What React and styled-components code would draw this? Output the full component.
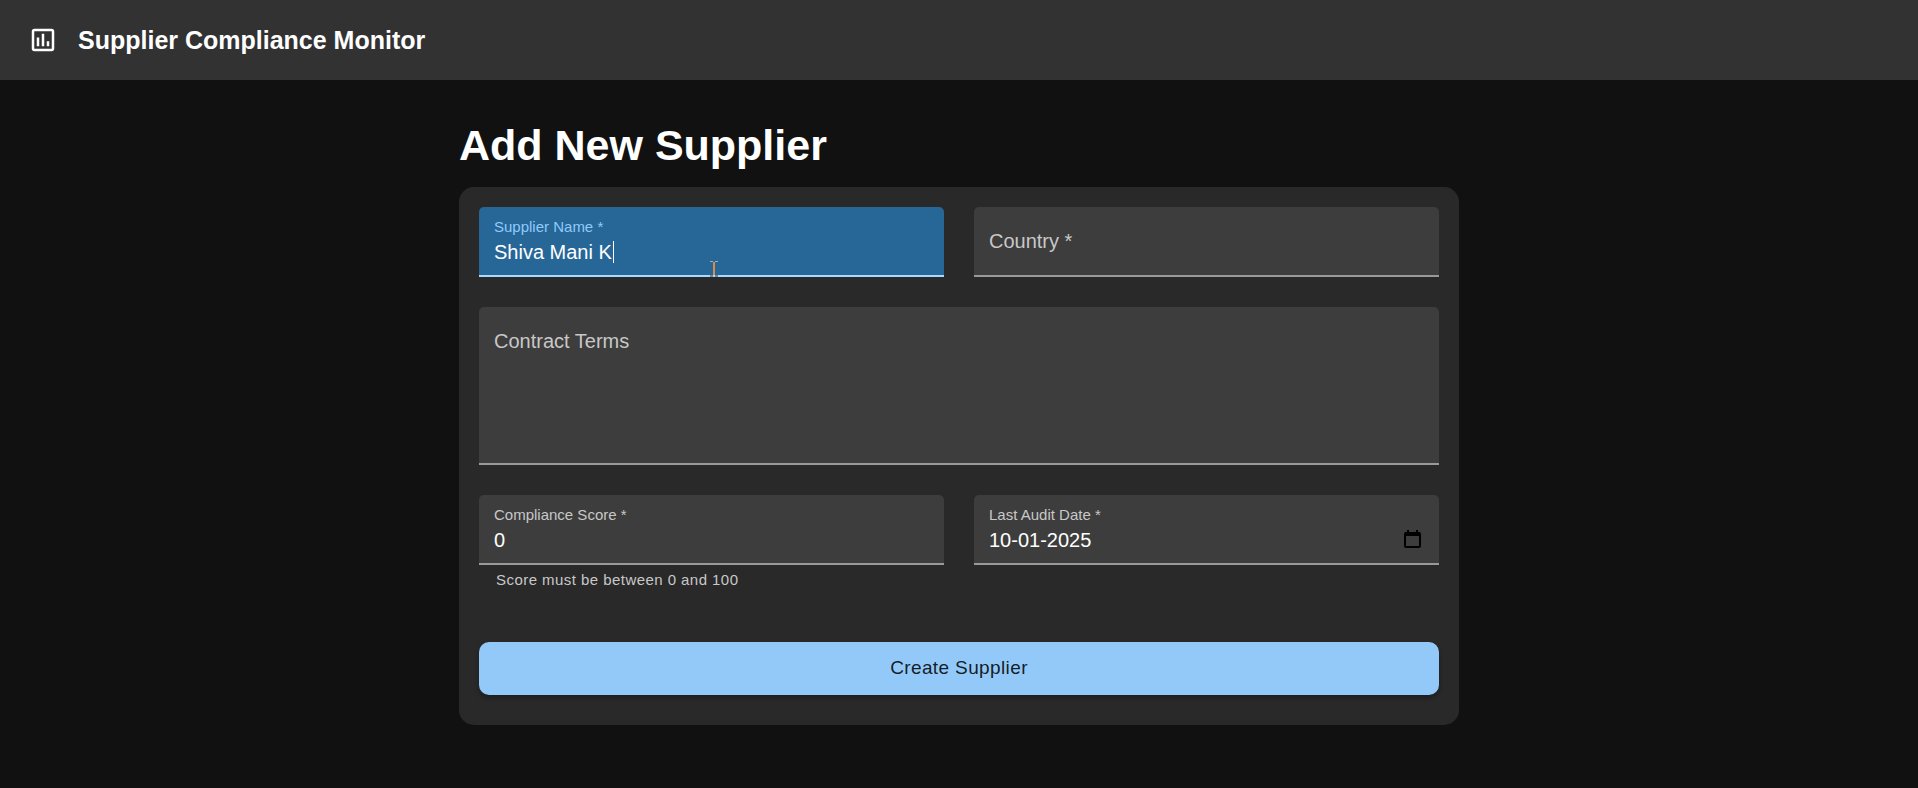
import React, { useState } from "react";
import styled, { createGlobalStyle } from "styled-components";

const GlobalStyle = createGlobalStyle`
  *, *::before, *::after { box-sizing: border-box; }
  body {
    margin: 0;
    background: #111111;
    color: #ffffff;
    font-family: "Liberation Sans", Arial, Helvetica, sans-serif;
  }
`;

const Header = styled.header`
  display: flex;
  align-items: center;
  gap: 20px;
  padding: 20px 28px;
  background: #323232;
`;

const HeaderIcon = styled.svg`
  width: 30px;
  height: 30px;
  flex: none;
  fill: #ffffff;
`;

const Brand = styled.div`
  font-size: 25px;
  font-weight: 700;
  line-height: 40px;
`;

const Main = styled.main`
  max-width: 1000px;
  margin: 0 auto;
  padding: 40px 0;
`;

const Title = styled.h1`
  margin: 0 0 17px;
  font-size: 43px;
  font-weight: 700;
  line-height: 50px;
`;

const Card = styled.form`
  display: grid;
  grid-template-columns: repeat(2, minmax(0, 1fr));
  gap: 30px;
  padding: 20px 20px 30px;
  border-radius: 15px;
  background: #292929;
`;

const Cell = styled.div`
  grid-column: ${(p) => (p.$wide ? "1 / -1" : "auto")};
`;

const Field = styled.div`
  display: grid;
  align-items: start;
  position: relative;
`;

const Label = styled.label`
  grid-area: 1 / 1;
  z-index: 1;
  justify-self: start;
  pointer-events: none;
  margin-left: 15px;
  margin-top: ${(p) => (p.$floated ? "10px" : "22px")};
  font-size: ${(p) => (p.$floated ? "15px" : "20px")};
  line-height: ${(p) => (p.$floated ? "20px" : "24px")};
  color: ${(p) => (p.$active ? "#90caf9" : "#c8c8c8")};
`;

const Input = styled.input`
  grid-area: 1 / 1;
  width: 100%;
  height: 70px;
  margin: 0;
  padding: 31px 15px 9px;
  border: 0;
  border-bottom: 2px solid ${(p) => (p.$active ? "#a9dbff" : "#999999")};
  border-radius: 5px 5px 0 0;
  outline: none;
  background: ${(p) => (p.$active ? "#266798" : "#3d3d3d")};
  color: #ffffff;
  font: 20px/28px "Liberation Sans", Arial, Helvetica, sans-serif;
  resize: none;
  appearance: textfield;

  &::-webkit-inner-spin-button { appearance: none; }
`;

const TextArea = styled(Input)`
  display: block;
  height: 158px;
`;

const Helper = styled.p`
  margin: 3px 17px 0;
  font-size: 15px;
  line-height: 24px;
  letter-spacing: 0.03em;
  color: #c8c8c8;
`;

const Caret = styled.span`
  position: absolute;
  left: 134px;
  top: 34px;
  width: 1px;
  height: 22px;
  background: #ffffff;
`;

const Pointer = styled.svg`
  position: absolute;
  left: 231px;
  top: 53px;
  width: 8px;
  height: 17px;
`;

const PickerButton = styled.button`
  grid-area: 1 / 1;
  z-index: 1;
  justify-self: end;
  display: flex;
  margin: 33px 14px 0 0;
  padding: 0;
  border: 0;
  background: none;
  color: #000000;

  svg { width: 24px; height: 24px; }
`;

const Submit = styled.button`
  grid-column: 1 / -1;
  margin-top: 20px;
  padding: 11px 20px 12px;
  border: 0;
  border-radius: 10px;
  background: #92c9f8;
  color: rgba(0, 0, 0, 0.87);
  font: 19px/30px "Liberation Sans", Arial, Helvetica, sans-serif;
  letter-spacing: 0.02em;
  box-shadow: 0 3px 5px rgba(0, 0, 0, 0.3);
`;

export default function App() {
  const [form, setForm] = useState({
    name: "Shiva Mani K",
    country: "",
    terms: "",
    score: "0",
    date: "10-01-2025",
  });
  const bind = (key) => ({
    id: key,
    name: key,
    value: form[key],
    onChange: (e) => setForm({ ...form, [key]: e.target.value }),
  });

  return (
    <>
      <GlobalStyle />
      <Header>
        <HeaderIcon viewBox="0 0 24 24" aria-hidden="true">
          <path d="M9 17H7v-7h2v7zm4 0h-2V7h2v10zm4 0h-2v-4h2v4zm2 2H5V5h14v14zm0-16H5c-1.1 0-2 .9-2 2v14c0 1.1.9 2 2 2h14c1.1 0 2-.9 2-2V5c0-1.1-.9-2-2-2z" />
        </HeaderIcon>
        <Brand>Supplier Compliance Monitor</Brand>
      </Header>
      <Main>
        <Title>Add New Supplier</Title>
        <Card onSubmit={(e) => e.preventDefault()}>
          <Cell>
            <Field>
              <Label htmlFor="name" $floated $active>Supplier Name *</Label>
              <Input {...bind("name")} $active autoComplete="off" />
              <Caret />
              <Pointer viewBox="0 0 8 17" aria-hidden="true">
                <path d="M0 1.5H3M5 1.5H8" stroke="#a9a9a9" />
                <path d="M4 2V15" stroke="#e08a4a" strokeWidth="2" />
                <path d="M0 16H3M5 16H8" stroke="#333333" />
              </Pointer>
            </Field>
          </Cell>
          <Cell>
            <Field>
              <Label htmlFor="country" $floated={form.country !== ""}>Country *</Label>
              <Input {...bind("country")} />
            </Field>
          </Cell>
          <Cell $wide>
            <Field>
              <Label htmlFor="terms" $floated={form.terms !== ""}>Contract Terms</Label>
              <TextArea as="textarea" {...bind("terms")} />
            </Field>
          </Cell>
          <Cell>
            <Field>
              <Label htmlFor="score" $floated>Compliance Score *</Label>
              <Input {...bind("score")} type="number" min="0" max="100" />
            </Field>
            <Helper>Score must be between 0 and 100</Helper>
          </Cell>
          <Cell>
            <Field>
              <Label htmlFor="date" $floated>Last Audit Date *</Label>
              <Input {...bind("date")} />
              <PickerButton type="button" aria-label="Open date picker">
                <svg viewBox="0 0 24 24" fill="none" stroke="currentColor" strokeWidth="2">
                  <rect x="4" y="5" width="15" height="14" rx="1" />
                  <path d="M4 6H19" strokeWidth="4" />
                  <path d="M7 2V5M16 2V5" />
                </svg>
              </PickerButton>
            </Field>
          </Cell>
          <Submit type="submit">Create Supplier</Submit>
        </Card>
      </Main>
    </>
  );
}
